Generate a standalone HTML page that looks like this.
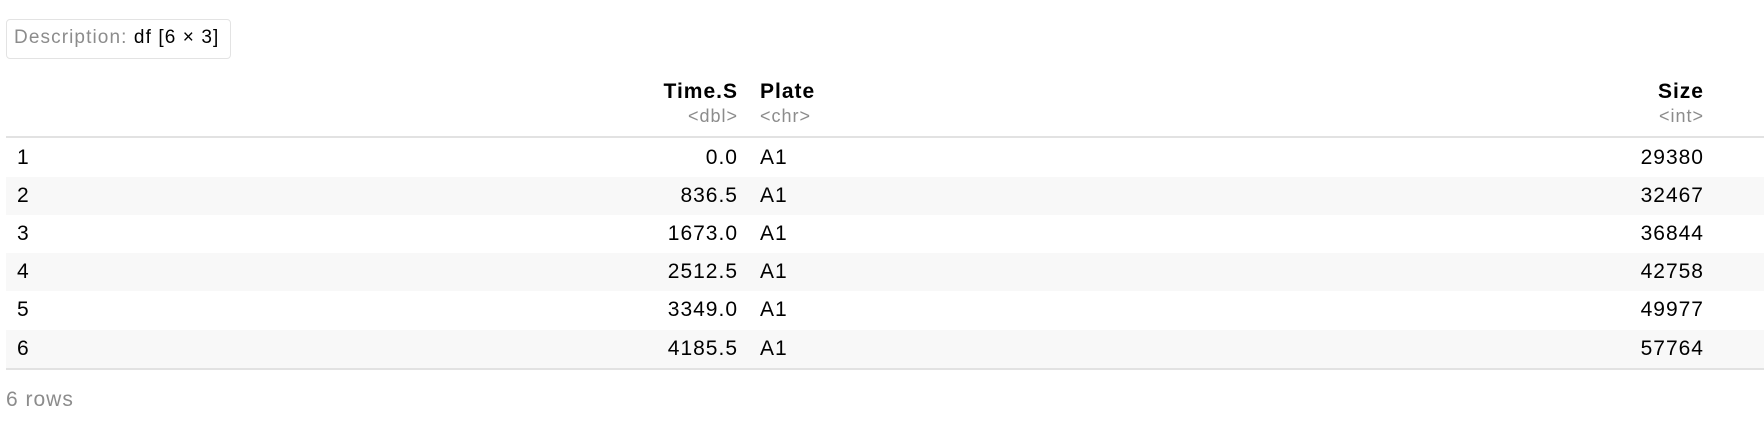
<!DOCTYPE html>
<html><head><meta charset="utf-8"><style>
body{margin:0;width:1764px;height:428px;background:#fff;font-family:"Liberation Sans",sans-serif;font-size:21px;letter-spacing:1px;color:#000;position:relative;overflow:hidden}
.a{position:absolute;white-space:nowrap;line-height:24px}
.r{text-align:right}
.box{position:absolute;left:6px;top:19px;width:223px;height:38px;border:1px solid #e3e3e3;border-radius:4px}
.band{position:absolute;left:6px;right:0;height:38px;background:#f8f8f8}
.line{position:absolute;left:6px;right:0;height:2px;background:#e2e2e2}
.g{color:#8c8c8c}
</style></head><body>
<div class="box"></div>
<div class="a" style="left:14px;top:26px;font-size:19px;letter-spacing:1.1px"><span class="g">Description:</span> df [6 × 3]</div>

<div class="a r" style="right:1026px;top:80px;font-weight:bold">Time.S</div>
<div class="a r g" style="right:1026px;top:104px;font-size:18px">&lt;dbl&gt;</div>
<div class="a" style="left:760px;top:80px;font-weight:bold">Plate</div>
<div class="a g" style="left:760px;top:104px;font-size:18px">&lt;chr&gt;</div>
<div class="a r" style="right:60px;top:80px;font-weight:bold">Size</div>
<div class="a r g" style="right:60px;top:104px;font-size:18px">&lt;int&gt;</div>
<div class="line" style="top:136px"></div>

<div class="band" style="top:177px"></div>
<div class="band" style="top:253px"></div>
<div class="band" style="top:330px"></div>
<div class="line" style="top:368px"></div>

<div class="a" style="left:17px;top:146px">1</div>
<div class="a r" style="right:1026px;top:146px">0.0</div>
<div class="a" style="left:760px;top:146px">A1</div>
<div class="a r" style="right:60px;top:146px">29380</div>

<div class="a" style="left:17px;top:184px">2</div>
<div class="a r" style="right:1026px;top:184px">836.5</div>
<div class="a" style="left:760px;top:184px">A1</div>
<div class="a r" style="right:60px;top:184px">32467</div>

<div class="a" style="left:17px;top:222px">3</div>
<div class="a r" style="right:1026px;top:222px">1673.0</div>
<div class="a" style="left:760px;top:222px">A1</div>
<div class="a r" style="right:60px;top:222px">36844</div>

<div class="a" style="left:17px;top:260px">4</div>
<div class="a r" style="right:1026px;top:260px">2512.5</div>
<div class="a" style="left:760px;top:260px">A1</div>
<div class="a r" style="right:60px;top:260px">42758</div>

<div class="a" style="left:17px;top:298px">5</div>
<div class="a r" style="right:1026px;top:298px">3349.0</div>
<div class="a" style="left:760px;top:298px">A1</div>
<div class="a r" style="right:60px;top:298px">49977</div>

<div class="a" style="left:17px;top:337px">6</div>
<div class="a r" style="right:1026px;top:337px">4185.5</div>
<div class="a" style="left:760px;top:337px">A1</div>
<div class="a r" style="right:60px;top:337px">57764</div>

<div class="a g" style="left:6px;top:388px">6 rows</div>
</body></html>
